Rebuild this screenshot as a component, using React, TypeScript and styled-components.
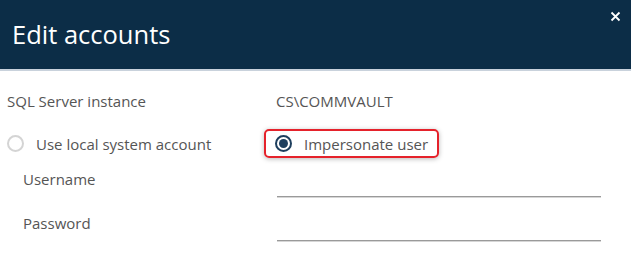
import React, { useState } from "react";
import styled, { createGlobalStyle } from "styled-components";

const GlobalStyle = createGlobalStyle`
  body {
    margin: 0;
    background: #ffffff;
    font-family: "Open Sans", "Noto Sans", sans-serif;
  }
`;

const Dialog = styled.div`
  width: 631px;
  height: 260px;
  background: #ffffff;
  overflow: hidden;
`;

const Header = styled.div`
  height: 69px;
  background-color: #0c2d47;
  border-bottom: 2px solid #c9d2dc;
  display: flex;
  align-items: center;
  justify-content: space-between;
  padding: 0 10px 0 12px;
  position: relative;
`;

const Title = styled.h1`
  margin: 0 0 2px 0;
  font-size: 25.5px;
  font-weight: 400;
  color: #ffffff;
`;

const CloseButton = styled.button`
  position: absolute;
  top: 11px;
  right: 10px;
  width: 11px;
  height: 11px;
  padding: 0;
  border: 0;
  background: transparent;
  cursor: pointer;
  display: flex;
  svg {
    width: 11px;
    height: 11px;
  }
`;

const Body = styled.div`
  display: flex;
  flex-direction: column;
  padding-top: 15px;
`;

const Row = styled.div<{ $height: number; $gap: number }>`
  display: grid;
  grid-template-columns: 264px 337px;
  height: ${(p) => p.$height}px;
  margin-bottom: ${(p) => p.$gap}px;
`;

const Label = styled.div<{ $indent: number }>`
  display: flex;
  align-items: center;
  padding-left: ${(p) => p.$indent}px;
  font-size: 15px;
  color: #555555;
`;

const Value = styled.div`
  display: flex;
  align-items: center;
  padding-left: 12px;
  font-size: 15px;
  color: #555555;
`;

const RadioOption = styled.label<{ $highlight?: boolean }>`
  display: flex;
  align-items: center;
  gap: 12px;
  font-size: 15px;
  color: #555555;
  cursor: pointer;
  width: ${(p) => (p.$highlight ? "175px" : "auto")};
  padding-left: ${(p) => (p.$highlight ? "9px" : "7px")};
  box-sizing: border-box;
  border: ${(p) => (p.$highlight ? "2px solid #e5222b" : "0")};
  border-radius: 5px;
  box-shadow: ${(p) => (p.$highlight ? "0 1px 5px rgba(0, 0, 0, 0.28)" : "none")};
`;

const RadioCircle = styled.span<{ $checked: boolean }>`
  width: 17px;
  height: 17px;
  box-sizing: border-box;
  border-radius: 50%;
  border: 2px solid ${(p) => (p.$checked ? "#1e3f5e" : "#d4d4d4")};
  display: flex;
  align-items: center;
  justify-content: center;
  flex-shrink: 0;
  &::after {
    content: "";
    width: 9px;
    height: 9px;
    border-radius: 50%;
    background: ${(p) => (p.$checked ? "#1e3f5e" : "transparent")};
  }
`;

const FieldLabel = styled(Label)`
  padding-bottom: 4px;
`;

const Input = styled.input`
  margin-left: 13px;
  width: 324px;
  height: 32px;
  box-sizing: border-box;
  border: 0;
  border-bottom: 1px solid #9a9a9a;
  box-shadow: 0 1px 0 #d6d6d6;
  outline: none;
  font-family: inherit;
  font-size: 15px;
  color: #333;
  background: transparent;
`;

export default function App() {
  const [mode, setMode] = useState<"local" | "impersonate">("impersonate");
  const [username, setUsername] = useState("");
  const [password, setPassword] = useState("");

  return (
    <Dialog>
      <GlobalStyle />
      <Header>
        <Title>Edit accounts</Title>
        <CloseButton aria-label="close">
          <svg viewBox="0 0 11 11">
            <path d="M1.5 1.5 L9.5 9.5 M9.5 1.5 L1.5 9.5" stroke="#ffffff" strokeWidth="1.8" />
          </svg>
        </CloseButton>
      </Header>
      <Body>
        <Row $height={30} $gap={13}>
          <Label $indent={7}>SQL Server instance</Label>
          <Value>CS\COMMVAULT</Value>
        </Row>
        <Row $height={29} $gap={7}>
          <RadioOption onClick={() => setMode("local")}>
            <RadioCircle $checked={mode === "local"} />
            Use local system account
          </RadioOption>
          <RadioOption $highlight onClick={() => setMode("impersonate")}>
            <RadioCircle $checked={mode === "impersonate"} />
            Impersonate user
          </RadioOption>
        </Row>
        <Row $height={32} $gap={12}>
          <FieldLabel $indent={23}>Username</FieldLabel>
          <Input value={username} onChange={(e) => setUsername(e.target.value)} />
        </Row>
        <Row $height={32} $gap={0}>
          <FieldLabel $indent={23}>Password</FieldLabel>
          <Input
            type="password"
            value={password}
            onChange={(e) => setPassword(e.target.value)}
          />
        </Row>
      </Body>
    </Dialog>
  );
}
